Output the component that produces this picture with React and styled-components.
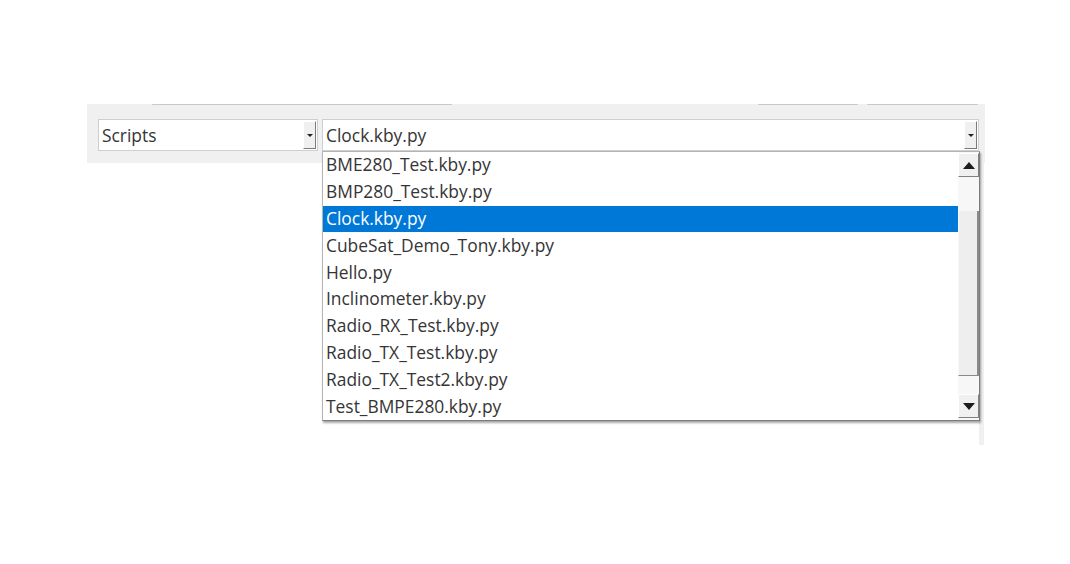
import React from "react";
import styled, { createGlobalStyle } from "styled-components";

const Global = createGlobalStyle`
  html, body { margin: 0; padding: 0; background: #ffffff; }
  body { font-family: "Open Sans", "Noto Sans", sans-serif; }
`;

const Page = styled.div`
  width: 1070px;
  height: 564px;
  padding: 104px 0 0 87px;
  box-sizing: border-box;
  overflow: hidden;
`;

const Panel = styled.div`
  position: relative;
  width: 898px;
  display: flex;
  flex-direction: column;
`;

const TabEdges = styled.div`
  height: 0;
  position: relative;
  display: flex;
`;

const TabEdge = styled.div`
  margin-left: ${(p) => p.$ml}px;
  width: ${(p) => p.$w}px;
  height: 1px;
  background: #c9c9c9;
  border-radius: 0 0 2px 2px;
  position: relative;
  z-index: 1;
`;

const Bar = styled.div`
  height: 59px;
  background: #f0f0f0;
  display: flex;
  align-items: flex-start;
  gap: 4px;
  padding: 15px 6px 0 11px;
  box-sizing: border-box;
`;

const Combo = styled.div`
  box-sizing: border-box;
  height: 32px;
  width: ${(p) => (p.$w ? `${p.$w}px` : "auto")};
  flex: ${(p) => (p.$grow ? 1 : "none")};
  background: #ffffff;
  border: 1px solid #cfcfcf;
  display: flex;
  align-items: center;
  padding: 1px 1px 1px 0;
`;

const ComboText = styled.span`
  flex: 1;
  padding: 2px 0 0 3px;
  font-size: 17.4px;
  color: #353535;
  line-height: 1;
`;

const ComboButton = styled.div`
  width: 13px;
  height: 28px;
  box-sizing: border-box;
  background: #f0f0f0;
  border-top: 1px solid #ffffff;
  border-left: 1px solid #ffffff;
  border-right: 1px solid #7a7a7a;
  border-bottom: 1px solid #7a7a7a;
  display: flex;
  align-items: center;
  justify-content: center;
`;

const SmallArrow = styled.div`
  width: 0;
  height: 0;
  border-left: 3px solid transparent;
  border-right: 3px solid transparent;
  border-top: 3px solid #222;
`;

const Strip = styled.div`
  align-self: flex-end;
  width: 5px;
  height: 282px;
  margin-right: 1px;
  background: #f0f0f0;
`;

const Popup = styled.div`
  position: absolute;
  top: 47px;
  left: 235px;
  width: 658px;
  height: 270px;
  box-sizing: border-box;
  background: #ffffff;
  border: 1px solid #b4b4b4;
  border-right-color: #7c7c7c;
  border-bottom-color: #7c7c7c;
  box-shadow: 1px 2px 2px rgba(0, 0, 0, 0.35);
  display: flex;
  z-index: 5;
`;

const List = styled.div`
  flex: 1;
  display: flex;
  flex-direction: column;
`;

const Item = styled.div`
  height: 27px;
  box-sizing: border-box;
  display: flex;
  align-items: center;
  padding: 0 0 2px 3px;
  font-size: 17.4px;
  color: ${(p) => (p.$sel ? "#ffffff" : "#353535")};
  background: ${(p) => (p.$sel ? "#0078d7" : "transparent")};
  white-space: nowrap;
`;

const Scroll = styled.div`
  width: 21px;
  display: flex;
  flex-direction: column;
  background: #f7f7f7;
  padding-top: 1px;
`;

const ScrollButton = styled.div`
  height: 24px;
  box-sizing: border-box;
  background: #f0f0f0;
  border-top: 1px solid #ffffff;
  border-left: 1px solid #ffffff;
  border-right: 1px solid #808080;
  border-bottom: 1px solid #808080;
  display: flex;
  align-items: center;
  justify-content: center;
`;

const Tri = styled.div`
  width: 0;
  height: 0;
  border-left: 6px solid transparent;
  border-right: 6px solid transparent;
  ${(p) =>
    p.$up
      ? "border-bottom: 7px solid #1c1c1c;"
      : "border-top: 7px solid #1c1c1c;"}
`;

const Track = styled.div`
  height: ${(p) => p.$h}px;
  background: #f7f7f7;
`;

const Thumb = styled.div`
  height: ${(p) => p.$h}px;
  box-sizing: border-box;
  background: #eeeeee;
  border-right: 2px solid #8a8a8a;
  border-bottom: 1px solid #8a8a8a;
  border-left: 1px solid #f8f8f8;
`;

const items = [
  "BME280_Test.kby.py",
  "BMP280_Test.kby.py",
  "Clock.kby.py",
  "CubeSat_Demo_Tony.kby.py",
  "Hello.py",
  "Inclinometer.kby.py",
  "Radio_RX_Test.kby.py",
  "Radio_TX_Test.kby.py",
  "Radio_TX_Test2.kby.py",
  "Test_BMPE280.kby.py",
];

export default function App() {
  return (
    <>
      <Global />
      <Page>
        <Panel>
          <TabEdges>
            <TabEdge $ml={65} $w={300} />
            <TabEdge $ml={306} $w={100} />
            <TabEdge $ml={9} $w={111} />
          </TabEdges>
          <Bar>
            <Combo $w={220}>
              <ComboText>Scripts</ComboText>
              <ComboButton>
                <SmallArrow />
              </ComboButton>
            </Combo>
            <Combo $grow>
              <ComboText>Clock.kby.py</ComboText>
              <ComboButton>
                <SmallArrow />
              </ComboButton>
            </Combo>
          </Bar>
          <Strip />
          <Popup>
            <List>
              {items.map((t) => (
                <Item key={t} $sel={t === "Clock.kby.py"}>
                  {t}
                </Item>
              ))}
            </List>
            <Scroll>
              <ScrollButton>
                <Tri $up />
              </ScrollButton>
              <Track $h={34} />
              <Thumb $h={165} />
              <Track $h={18} />
              <ScrollButton>
                <Tri />
              </ScrollButton>
            </Scroll>
          </Popup>
        </Panel>
      </Page>
    </>
  );
}
